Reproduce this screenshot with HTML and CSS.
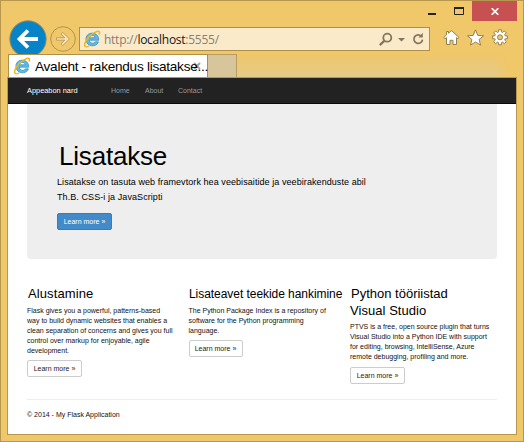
FILE: index.html
```html
<!DOCTYPE html>
<html lang="et">
<head>
<meta charset="utf-8">
<title>Avaleht</title>
<link rel="stylesheet" href="styles.css">
</head>
<body>
<svg width="0" height="0" class="defs">
  <symbol id="ie" viewBox="0 0 18 18">
    <path d="M15.700 10.200H6.300c.2 3.500 5 4 6 1.600h3.100c-1.500 5.900-12.500 5.500-12.500-2.500 0-8.400 13.300-8.400 12.800.9ZM6.400 7.800h5.800c-.3-3.100-5.400-3.100-5.800 0Z" fill="#5cbce9" stroke="#2b8ac2" stroke-width=".7"/>
    <path d="M2.800 16.700C.2 15.800 2 10.800 6.200 6.600 10.300 2.500 15.200.4 16.300 1.700c.5.700.2 1.900-.5 3" fill="none" stroke="#f0b61d" stroke-width="1.500"/>
    <path d="M2.800 16.700c1 .3 2.300-.1 3.600-.9" fill="none" stroke="#f0b61d" stroke-width="1.200"/>
  </symbol>
</svg>
<div class="window">
  <header class="titlebar">
    <svg class="min" width="8" height="2"><rect width="8" height="2" fill="#222"/></svg>
    <svg class="max" width="10" height="8"><path d="M.5 0v7.500h9V0M0 1h10" fill="none" stroke="#222"/><rect width="10" height="2" fill="#222"/></svg>
    <div class="close"><svg width="8" height="7" viewBox="0 0 8 7"><path d="M.7.2l6.600 6.600M7.300.2L.7 6.800" stroke="#fff" stroke-width="1.700"/></svg></div>
  </header>
  <div class="toolbar">
    <svg class="back" width="38" height="38" viewBox="0 0 38 38"><circle cx="19" cy="19" r="18.200" fill="#0784c7" stroke="#a58a4d"/><path d="M29 19H11M19 10.500L10.500 19l8.500 8.500" fill="none" stroke="#fff" stroke-width="3.800"/></svg>
    <svg class="forward" width="26" height="26" viewBox="0 0 26 26"><circle cx="13" cy="13" r="12.300" fill="none" stroke="#b19452"/><path d="M6.500 11.800h8.200l-3.600-3.700 1.700-1.700 6.600 6.600-6.600 6.600-1.700-1.700 3.600-3.700H6.500Z" fill="#f8e3b5" stroke="#b19452" stroke-width=".8"/></svg>
    <div class="address">
      <svg class="ie" width="18" height="18"><use href="#ie"/></svg>
      <span class="url">http://<b>localhost</b>:5555/</span>
      <svg class="tools" width="47" height="15" viewBox="0 0 47 15">
        <g fill="none" stroke="#85775b" stroke-width="1.800"><circle cx="8.300" cy="5.700" r="4"/><path d="M5.500 8.600L.8 13.100" stroke-width="2.200"/><path d="M42.300 4.100a4.300 4.300 0 1 0 1.200 3.500"/></g>
        <path d="M19 6h7l-3.500 3.600ZM39.500 5.600h4.300V.8Z" fill="#85775b"/>
      </svg>
    </div>
    <svg class="icons" width="66" height="18" viewBox="0 0 66 18" fill="#fff" stroke="#94804f" stroke-width="1">
      <path d="M8.500 1.500l7.500 7-1.100 1.300-1.400-1.200v6.900H10v-4.200H7v4.200H3.500V8.600L2 9.800.8 8.500l2.700-2.600V2.500h2v1.700Z"/>
      <path d="M32.500.9l2.300 5.500 5.800.4-4.500 3.700 1.500 5.600-5.100-3.100-5 3.100 1.400-5.600-4.400-3.700 5.700-.4Z"/>
      <path d="M55.600.8h2.800v2.100l1.300.6 1.600-1.600 2 2-1.600 1.600.6 1.400h2.100v2.800h-2.100l-.6 1.400 1.600 1.600-2 2-1.600-1.600-1.300.6v2.100h-2.800v-2.100l-1.300-.6-1.600 1.600-2-2 1.600-1.600-.6-1.400h-2.100V6.900h2.100l.6-1.400-1.600-1.600 2-2 1.600 1.600 1.300-.6Z"/><circle cx="57" cy="8.300" r="2.500" fill="#f0c769"/>
    </svg>
  </div>
  <div class="tabs">
    <div class="tab"><svg class="ie" width="18" height="18"><use href="#ie"/></svg><span class="tabname">Avaleht - rakendus lisatakse...</span>
      <svg class="tabclose" width="8" height="8"><path d="M1 1l6 6M7 1L1 7" stroke="#a3a3a3" stroke-width="2"/></svg></div>
    <div class="newtab"></div>
    <div class="haze"></div>
  </div>
  <div class="page">
    <nav><span class="brand">Appeabon nard</span><a class="home">Home</a><a class="about">About</a><a>Contact</a></nav>
    <main>
      <section class="hero">
        <h1>Lisatakse</h1>
        <p><span class="lead1">Lisatakse on tasuta web framevtork hea veebisaitide ja veebirakenduste abil</span><br><span class="lead2">Th.B. CSS-i ja JavaScripti</span></p>
        <a class="btn primary">Learn more »</a>
      </section>
      <div class="columns">
        <section class="col1"><h2>Alustamine</h2><p>Flask gives you a powerful, patterns-based<br>way to build dynamic websites that enables a<br>clean separation of concerns and gives you full<br>control over markup for enjoyable, agile<br>development.</p><a class="btn">Learn more »</a></section>
        <section class="col2"><h2>Lisateavet teekide hankimine</h2><p>The Python Package Index is a repository of<br>software for the Python programming<br>language.</p><a class="btn">Learn more »</a></section>
        <section class="col3"><h2>Python tööriistad<br><span class="vs">Visual Studio</span></h2><p>PTVS is a free, open source plugin that turns<br>Visual Studio into a Python IDE with support<br>for editing, browsing, IntelliSense, Azure<br>remote debugging, profiling and more.</p><a class="btn">Learn more »</a></section>
      </div>
      <footer>© 2014 - My Flask Application</footer>
    </main>
  </div>
</div>
</body>
</html>
```
FILE: styles.css
```css
* { box-sizing: border-box; }
body { margin: 0; font-family: "Liberation Sans", Arial, sans-serif; white-space: nowrap; }
svg { display: block; flex: none; }
.defs { position: absolute; }
.window { width: 524px; height: 442px; background: #f0c769; border: 1px solid #b7974e; overflow: hidden; }
.titlebar { height: 20px; display: flex; justify-content: flex-end; padding-right: 6px; }
.min { margin: 12px 18px 0 0; }
.max { margin: 6px 8px 0 0; }
.close { width: 45px; height: 20px; background: #c75050; display: flex; align-items: center; justify-content: center; padding-top: 1px; }
.toolbar { height: 33px; display: flex; align-items: flex-start; padding-left: 8px; }
.back { margin-top: -1px; }
.forward { margin: 5px 0 0 3px; }
.address { width: 351px; height: 24px; margin: 6px 0 0 3px; border: 1px solid #ad904c; background: #faeaca; display: flex; align-items: center; padding-left: 3px; }
.url { font: 12px "Open Sans", sans-serif; letter-spacing: -.26px; color: #88816f; margin: 0 auto 0 3px; }
.url b { font-weight: 400; color: #151515; }
.tools { margin-right: 3px; }
.icons { margin: 8px 0 0 13px; }
.tabs { height: 23px; display: flex; margin: 0 6px 0 7px; align-items: stretch; position: relative; }
.tab { width: 200px; background: #fff; border: 1px solid #ad904c; border-bottom: 0; display: flex; align-items: center; padding-left: 4px; position: relative; }
.tabname { font-size: 13.600px; margin-left: 4px; letter-spacing: -.26px; color: #000; position: relative; z-index: 1; }
.tabclose { position: absolute; right: 6px; top: 7px; }
.newtab { width: 29px; background: #d7c59c; border: 1px solid #b99d60; border-left: 0; border-bottom: 0; }
.haze { flex: 1; background: linear-gradient(90deg, #f0c76900 94%, #f0c769), linear-gradient(#f0c769, #e4ca8a); margin-right: 8px; }
.page { margin: 0 6px; width: 510px; height: 358px; border: 1px solid #b7974e; background: #fff; }
nav { height: 26px; background: #222; border-bottom: 1px solid #080808; display: flex; align-items: center; padding-left: 19px; font-size: 7px; color: #999; }
.brand { width: 84px; color: #fff; font-size: 7.400px; }
.home { width: 34px; }
.about { width: 33px; }
main { padding: 0 19px; }
.hero { height: 155px; background: #eee; border-radius: 0 0 4px 4px; padding: 36px 0 0 30px; }
h1 { margin: 0 0 0 2px; font-size: 26px; letter-spacing: -.2px; font-weight: 400; line-height: 32px; }
.hero p { margin: 3px 0 8px; font-size: 9px; line-height: 15px; }
.lead1 { letter-spacing: .07px; }
.lead2 { letter-spacing: .08px; }
.btn { display: flex; width: 55px; height: 17px; border: 1px solid #ccc; border-radius: 2px; align-items: center; justify-content: center; font-size: 7px; color: #222; background: #fff; }
.primary { background: #428bca; border-color: #357ebd; color: #fff; }
.columns { display: grid; grid-template-columns: 161.500px 161.500px 1fr; height: 140px; padding-top: 26px; }
h2 { margin: 0 0 4px 1px; font-size: 13px; line-height: 17px; font-weight: 400; }
.col1 h2 { letter-spacing: .1px; }
.col2 h2 { font-size: 12px; letter-spacing: -.05px; margin-left: .5px; padding-top: 1px; margin-bottom: 3px; }
.col2 .btn { width: 54px; }
.col3 h2 { margin-bottom: 3px; }
.vs { margin-left: -1px; letter-spacing: .05px; }
.columns p { margin: 0 0 4px; font-size: 7px; line-height: 10px; color: #111; }
.columns .col3 p { margin-bottom: 5px; }
footer { border-top: 1px solid #eee; padding-top: 10px; font-size: 7px; line-height: 10px; color: #111; }
```
